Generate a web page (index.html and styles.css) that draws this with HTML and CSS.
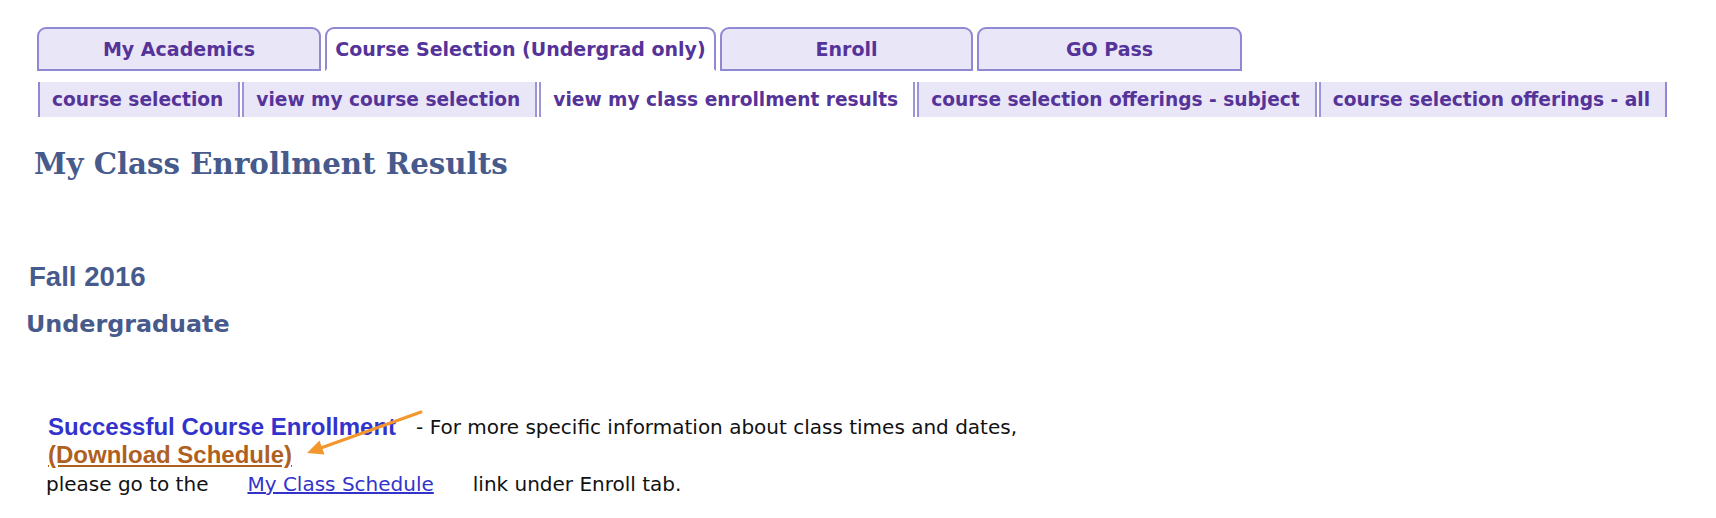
FILE: index.html
```html
<!DOCTYPE html>
<html>
<head>
<meta charset="utf-8">
<link rel="stylesheet" href="styles.css">
</head>
<body>
<div class="page">
  <div class="tabs">
    <div class="tab tab-1">My Academics</div>
    <div class="tab tab-2 active">Course Selection (Undergrad only)</div>
    <div class="tab tab-3">Enroll</div>
    <div class="tab tab-4">GO Pass</div>
  </div>
  <div class="subtabs">
    <div class="sub">course selection</div>
    <div class="sep"></div>
    <div class="sub">view my course selection</div>
    <div class="sep"></div>
    <div class="sub active">view my class enrollment results</div>
    <div class="sep"></div>
    <div class="sub">course selection offerings - subject</div>
    <div class="sep"></div>
    <div class="sub last">course selection offerings - all</div>
  </div>

  <h1 class="title">My Class Enrollment Results</h1>

  <h2 class="term">Fall 2016</h2>
  <h3 class="career">Undergraduate</h3>

  <div class="message">
    <div class="line1">
      <span class="success">Successful Course Enrollment</span>
      <span class="info">- For more specific information about class times and dates,</span>
    </div>
    <div class="line2"><a class="download" href="#">(Download Schedule)</a></div>
    <div class="line3">
      <span class="info">please go to the</span>
      <a class="schedule" href="#">My Class Schedule</a>
      <span class="info">link under Enroll tab.</span>
    </div>
  </div>
  <svg class="arrow" width="130" height="60" viewBox="0 0 130 60">
    <line x1="119" y1="9" x2="16" y2="46" stroke="#f4962e" stroke-width="3" stroke-linecap="round"/>
    <polygon points="5,50 22.5,51.5 17.5,37.5" fill="#f4962e"/>
  </svg>
</div>
</body>
</html>
```
FILE: styles.css
```css
html, body {
  margin: 0;
  padding: 0;
  background: #ffffff;
}

.page {
  position: relative;
  width: 1716px;
  height: 518px;
  overflow: hidden;
  font-family: "DejaVu Sans", Verdana, sans-serif;
}

.tabs {
  display: flex;
  gap: 4px;
  padding-left: 37px;
  padding-top: 27px;
}

.tab {
  box-sizing: border-box;
  height: 44px;
  display: flex;
  align-items: center;
  justify-content: center;
  background: #e9e6f8;
  border: 2px solid #8f89d3;
  border-radius: 9px 9px 0 0;
  color: #553399;
  font-weight: bold;
  font-size: 19px;
}

.tab.active {
  background: #ffffff;
  border-bottom-color: #ffffff;
}

.tab-1 { width: 284px; }
.tab-2 { width: 391px; }
.tab-3 { width: 253px; }
.tab-4 { width: 265px; }

.subtabs {
  display: flex;
  margin-top: 11px;
  margin-left: 38px;
  height: 35px;
}

.sub {
  display: flex;
  align-items: center;
  padding: 0 15px 0 12px;
  background: #e9e6f8;
  color: #553399;
  font-weight: bold;
  font-size: 18.6px;
  white-space: nowrap;
}

.sub:first-child {
  border-left: 2px solid #8f89d3;
}

.sub.active {
  background: #ffffff;
}

.sub.last {
  border-right: 2px solid #8f89d3;
}

.sep {
  width: 2px;
  border-left: 2px solid #9a94d8;
  border-right: 2px solid #9a94d8;
  background: #ffffff;
}

.title {
  margin: 27px 0 0 34px;
  font-family: "DejaVu Serif", Georgia, serif;
  font-size: 29.3px;
  line-height: 40px;
  font-weight: bold;
  color: #475a8c;
}

.term {
  margin: 77px 0 0 29px;
  font-family: "Liberation Sans", Arial, sans-serif;
  font-size: 27.6px;
  line-height: 32px;
  font-weight: bold;
  color: #475a8c;
}

.career {
  margin: 16px 0 0 26px;
  font-size: 23.8px;
  line-height: 30px;
  font-weight: bold;
  color: #475a8c;
}

.message {
  margin: 74px 0 0 46px;
  font-size: 20px;
  color: #111111;
}

.line1 {
  display: flex;
  align-items: center;
  gap: 20px;
  padding-left: 2px;
  height: 28px;
}

.success {
  font-family: "Liberation Sans", Arial, sans-serif;
  font-weight: bold;
  font-size: 24px;
  color: #3333cc;
}

.line2 {
  padding-left: 2px;
  height: 28px;
  line-height: 28px;
}

.download {
  font-family: "Liberation Sans", Arial, sans-serif;
  font-weight: bold;
  font-size: 24px;
  color: #b0601e;
  text-decoration: underline;
}

.line3 {
  display: flex;
  align-items: center;
  gap: 39px;
  height: 30px;
}

.schedule {
  color: #3333cc;
  text-decoration: underline;
}

.arrow {
  position: absolute;
  left: 302px;
  top: 403px;
}
```
